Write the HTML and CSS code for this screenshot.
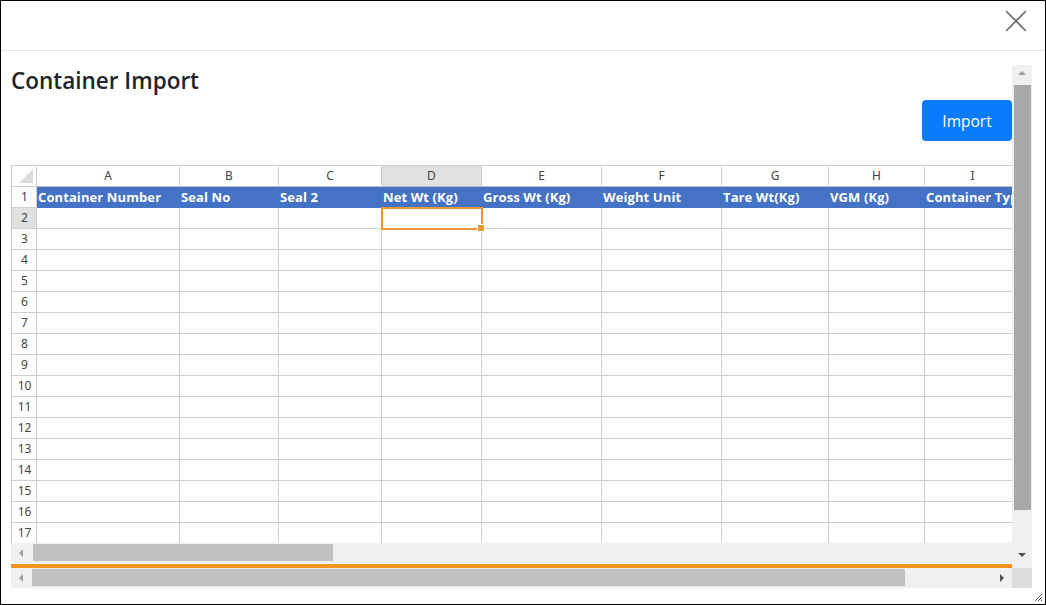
FILE: index.html
```html
<!DOCTYPE html>
<html>
<head>
<meta charset="utf-8">
<link rel="stylesheet" href="styles.css">
</head>
<body>
<div class="modal">
  <div class="modal-header">
    <button class="close" aria-label="Close">
      <svg width="22" height="22" viewBox="0 0 22 22"><path d="M1 1 L21 21 M21 1 L1 21" stroke="#6b6b6b" stroke-width="1.6" fill="none"/></svg>
    </button>
  </div>
  <div class="modal-body">
    <div class="scroller">
      <div class="content">
        <h2 class="title">Container Import</h2>
        <div class="actions"><button class="btn-import">Import</button></div>
        <div class="sheet">
          <div class="grid" id="grid"></div>
          <div class="hscroll inner">
            <span class="arrow-left"></span>
            <span class="thumb thumb-inner"></span>
          </div>
        </div>
        <div class="orange"></div>
      </div>
      <div class="vscroll">
        <span class="arrow-up"></span>
        <span class="vthumb"></span>
        <span class="arrow-down"></span>
      </div>
      <div class="hscroll outer">
        <span class="arrow-left"></span>
        <span class="thumb thumb-outer"></span>
        <span class="arrow-right"></span>
      </div>
      <div class="corner"></div>
    </div>
  </div>
  <div class="grip">
    <svg width="9" height="9" viewBox="0 0 9 9"><path d="M8 1 L1 8 M8 4 L4 8 M8 7 L7 8" stroke="#555" stroke-width="1"/></svg>
  </div>
</div>
<script src="app.js"></script>
</body>
</html>
```
FILE: app.js
```js
const cols = ['A','B','C','D','E','F','G','H','I','J'];
const heads = ['Container Number','Seal No','Seal 2','Net Wt (Kg)','Gross Wt (Kg)','Weight Unit','Tare Wt(Kg)','VGM (Kg)','Container Type',''];
const g = document.getElementById('grid');
function cell(cls, text) {
  const d = document.createElement('div');
  d.className = 'c ' + cls;
  d.textContent = text || '';
  g.appendChild(d);
  return d;
}
cell('corner-cell', '');
cols.forEach((c, i) => cell('colhead' + (i === 3 ? ' sel' : ''), c));
for (let r = 1; r <= 18; r++) {
  cell('rowhead' + (r === 2 ? ' sel' : ''), String(r));
  cols.forEach((c, i) => {
    if (r === 1) cell('hdr', heads[i]);
    else if (r === 2 && i === 3) cell('active', '');
    else cell('data', '');
  });
}
```
FILE: styles.css
```css
* { box-sizing: border-box; }
html, body { margin: 0; padding: 0; }
body {
  width: 1046px;
  height: 605px;
  overflow: hidden;
  font-family: "Open Sans", "Noto Sans", sans-serif;
  background: #fff;
}
.modal {
  position: relative;
  width: 1046px;
  height: 605px;
  border: 1px solid #000;
  background: #fff;
}
.modal-header {
  height: 50px;
  border-bottom: 1px solid #e6e6e6;
  display: flex;
  justify-content: flex-end;
  align-items: flex-start;
  padding: 9px 18px 0 0;
}
.close {
  border: 0;
  background: none;
  padding: 0;
  width: 22px;
  height: 22px;
  cursor: pointer;
}
.close svg { display: block; }
.modal-body {
  padding: 14px 0 0 10px;
}
.scroller {
  display: grid;
  grid-template-columns: 1001px 20px;
  grid-template-rows: 503px 20px;
  width: 1021px;
}
.content {
  overflow: hidden;
  display: flex;
  flex-direction: column;
}
.title {
  margin: 0;
  height: 35px;
  flex: none;
  padding-top: 0;
  font-size: 22.5px;
  font-weight: 600;
  color: #212529;
  line-height: 32px;
  letter-spacing: 0;
}
.actions {
  display: flex;
  justify-content: flex-end;
  height: 65px;
  flex: none;
}
.btn-import {
  width: 90px;
  height: 41px;
  border: 0;
  border-radius: 4px;
  background: #0a7bff;
  color: #fff;
  font-family: "Open Sans", "Noto Sans", sans-serif;
  font-size: 15.5px;
  padding: 0;
  margin-right: 0;
}
.sheet {
  height: 398px;
  flex: none;
  overflow: hidden;
  display: flex;
  flex-direction: column;
}
.grid {
  display: grid;
  grid-template-columns: 25px 143px 99px 103px 100px 120px 120px 107px 96px 96px 120px;
  grid-template-rows: 22px;
  grid-auto-rows: 21px;
  height: 378px;
  flex: none;
  overflow: hidden;
  width: 1001px;
  border-left: 1px solid #c6c6c6;
}
.c {
  border-right: 1px solid #d0d0d0;
  border-bottom: 1px solid #d0d0d0;
  font-size: 12px;
  line-height: 20px;
  color: #333;
  white-space: nowrap;
  overflow: hidden;
}
.corner-cell {
  position: relative;
  border-top: 1px solid #d0d0d0;
}
.corner-cell::after {
  content: "";
  position: absolute;
  right: 3px;
  bottom: 3px;
  width: 0;
  height: 0;
  border-left: 14px solid transparent;
  border-bottom: 14px solid #dcdcdc;
}
.colhead {
  text-align: center;
  border-top: 1px solid #d0d0d0;
  border-bottom-color: #bdbdbd;
  font-family: "Noto Sans", "Open Sans", sans-serif;
  color: #444;
}
.colhead.sel { background: #e1e1e1; }
.rowhead {
  text-align: center;
  font-family: "Noto Sans", "Open Sans", sans-serif;
  color: #444;
  padding-left: 1px;
}
.rowhead.sel { background: #e1e1e1; }
.hdr {
  background: #4472c4;
  color: #fff;
  font-weight: 700;
  font-size: 13px;
  line-height: 21px;
  padding-left: 1px;
  border-right: 0;
  border-bottom-color: #4472c4;
  letter-spacing: 0.1px;
}
.data { background: #fff; }
.active {
  position: relative;
  overflow: visible;
  z-index: 2;
  border: 2px solid #f0962f;
  margin: -1px 0 0 -1px;
  width: calc(100% + 2px);
  height: 23px;
}
.active::after {
  content: "";
  position: absolute;
  right: -4px;
  bottom: -4px;
  width: 6px;
  height: 6px;
  background: #f0962f;
  border: 1px solid #fff;
}
.hscroll {
  position: relative;
  height: 20px;
  background: #f0f0f0;
  flex: none;
}
.hscroll.inner { width: 1001px; }
.arrow-left {
  position: absolute;
  left: 8px;
  top: 6px;
  width: 0; height: 0;
  border-top: 4px solid transparent;
  border-bottom: 4px solid transparent;
  border-right: 4px solid #a0a0a0;
}
.arrow-right {
  position: absolute;
  right: 8px;
  top: 6px;
  width: 0; height: 0;
  border-top: 4px solid transparent;
  border-bottom: 4px solid transparent;
  border-left: 4px solid #505050;
}
.thumb {
  position: absolute;
  top: 1px;
  height: 17px;
  background: #c1c1c1;
}
.thumb-inner { left: 22px; width: 300px; }
.thumb-outer { left: 21px; width: 873px; }
.orange {
  height: 4px;
  margin-top: 1px;
  background: #f7911e;
  flex: none;
}
.vscroll {
  position: relative;
  background: #f0f0f0;
  grid-row: 1;
  grid-column: 2;
}
.arrow-up {
  position: absolute;
  left: 6px;
  top: 6px;
  width: 0; height: 0;
  border-left: 4px solid transparent;
  border-right: 4px solid transparent;
  border-bottom: 4px solid #a0a0a0;
}
.arrow-down {
  position: absolute;
  left: 6px;
  top: 488px;
  width: 0; height: 0;
  border-left: 4px solid transparent;
  border-right: 4px solid transparent;
  border-top: 4px solid #505050;
}
.vthumb {
  position: absolute;
  left: 2px;
  top: 20px;
  width: 17px;
  height: 425px;
  background: #a8a8a8;
}
.hscroll.outer { grid-row: 2; grid-column: 1; }
.corner { background: #dcdcdc; grid-row: 2; grid-column: 2; }
.grip {
  position: absolute;
  right: 2px;
  bottom: 2px;
  width: 9px;
  height: 9px;
}
.grip svg { display: block; }
```
